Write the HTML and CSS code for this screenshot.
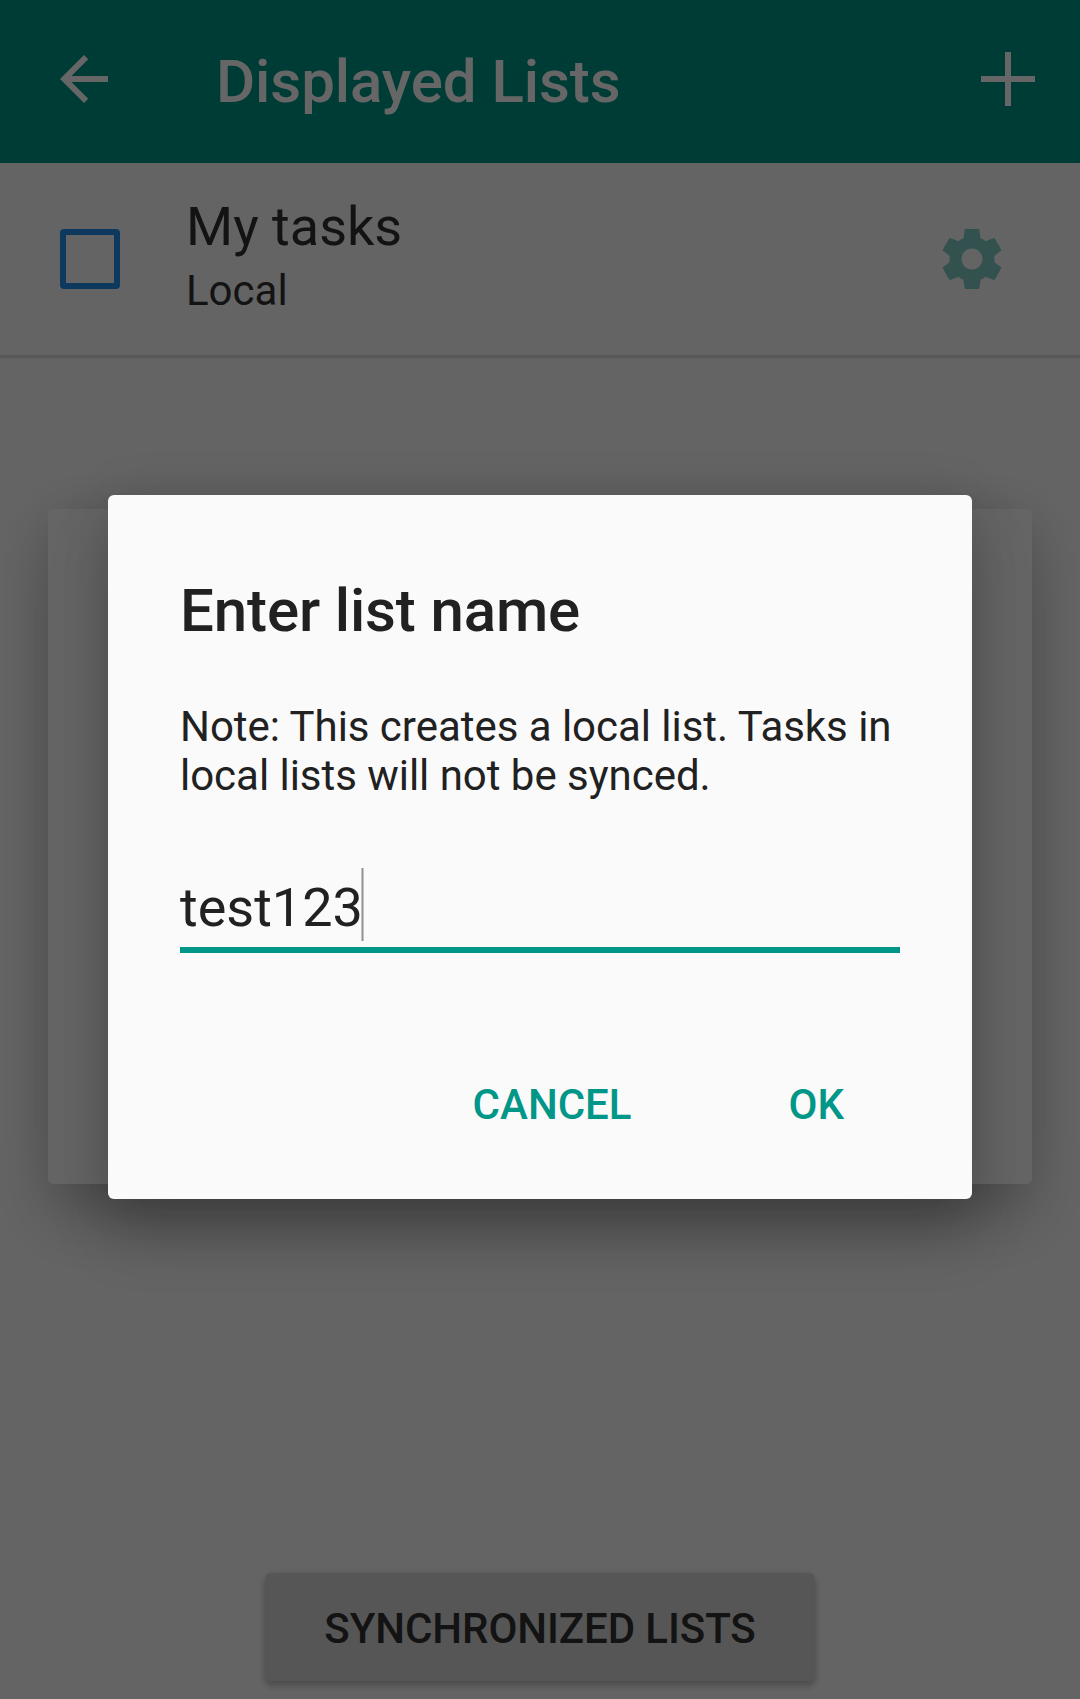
FILE: index.html
```html
<!DOCTYPE html>
<html lang="en">
<head>
<meta charset="utf-8">
<title>Displayed Lists</title>
<link rel="stylesheet" href="styles.css">
</head>
<body>
<div class="screen">
  <header class="toolbar">
    <svg class="icon back" viewBox="0 0 24 24"><path d="M20 11H7.83l5.59-5.59L12 4l-8 8 8 8 1.41-1.41L7.83 13H20v-2z"/></svg>
    <h1 class="toolbar-title">Displayed Lists</h1>
    <svg class="add" viewBox="0 0 54 54"><path d="M24 0h6v24h24v6H30v24h-6V30H0v-6h24z"/></svg>
  </header>
  <div class="list-row">
    <span class="checkbox"></span>
    <div class="list-text">
      <div class="list-name">My tasks</div>
      <div class="list-account">Local</div>
    </div>
    <svg class="icon gear" viewBox="0 0 24 24"><path d="M19.43 12.98c.04-.32.07-.64.07-.98s-.03-.66-.07-.98l2.11-1.65c.19-.15.24-.42.12-.64l-2-3.46c-.12-.22-.39-.3-.61-.22l-2.49 1c-.52-.4-1.08-.73-1.69-.98l-.38-2.65C14.46 2.18 14.25 2 14 2h-4c-.25 0-.46.18-.49.42l-.38 2.65c-.61.25-1.17.59-1.69.98l-2.49-1c-.23-.09-.49 0-.61.22l-2 3.46c-.13.22-.07.49.12.64l2.11 1.65c-.04.32-.07.65-.07.98s.03.66.07.98l-2.11 1.65c-.19.15-.24.42-.12.64l2 3.46c.12.22.39.3.61.22l2.49-1c.52.4 1.08.73 1.69.98l.38 2.65c.03.24.24.42.49.42h4c.25 0 .46-.18.49-.42l.38-2.65c.61-.25 1.17-.59 1.69-.98l2.49 1c.23.09.49 0 .61-.22l2-3.46c.12-.22.07-.49-.12-.64l-2.11-1.65zM12 15.5c-1.93 0-3.5-1.57-3.5-3.5s1.57-3.5 3.5-3.5 3.5 1.57 3.5 3.5-1.57 3.5-3.5 3.5z"/></svg>
  </div>
  <div class="panel"></div>
  <button class="sync">SYNCHRONIZED LISTS</button>
</div>
<div class="scrim">
  <div class="dialog">
    <h2 class="dialog-title">Enter list name</h2>
    <p class="note">Note: This creates a local list. Tasks in local lists will not be synced.</p>
    <div class="field">test123<span class="caret"></span></div>
    <div class="actions"><span>CANCEL</span><span>OK</span></div>
  </div>
</div>
</body>
</html>
```

FILE: styles.css
```css
* { box-sizing: border-box; }
body {
  margin: 0;
  font-family: Roboto, sans-serif;
  color: #212121;
}
h1, h2, p { margin: 0; font-weight: 500; }
.screen {
  height: 1699px;
  background: #fafafa;
  display: flex;
  flex-direction: column;
  overflow: hidden;
}
.toolbar {
  height: 163px;
  flex: none;
  background: #009688;
  color: #fff;
  display: flex;
  align-items: center;
  padding: 0 45px 0 48px;
}
.icon { width: 72px; height: 72px; flex: none; display: block; }
.back { fill: #fff; margin-bottom: 5px; }
.toolbar-title {
  font-size: 60px;
  line-height: 70px;
  letter-spacing: -0.07px;
  margin-left: 96px;
  flex: 1;
}
.add { width: 54px; height: 54px; fill: #fff; margin-bottom: 5px; }
.list-row {
  height: 195px;
  flex: none;
  border-bottom: 3px solid #dcdcdc;
  padding: 32px 72px 0 60px;
  display: flex;
  align-items: flex-start;
  color: #303030;
}
.checkbox {
  width: 60px;
  height: 60px;
  margin-top: 34px;
  border: 6px solid #2190ee;
  border-radius: 4px;
}
.list-text { flex: 1; margin-left: 66px; }
.list-name { font-size: 54px; line-height: 63px; }
.list-account { font-size: 42px; line-height: 49px; margin-top: 8px; }
.gear { fill: #80cbc4; margin-top: 28px; }
.panel {
  flex: none;
  height: 675px;
  margin: 151px 48px 0;
  border-radius: 6px;
  background: #fcfcfc;
  box-shadow: 0 36px 60px rgba(0,0,0,.19), 0 0 50px rgba(0,0,0,.1);
}
.sync {
  flex: none;
  align-self: center;
  width: 550px;
  height: 108px;
  margin-top: 389px;
  padding: 3px 0 0;
  border: 0;
  border-radius: 6px;
  background: #d6d7d7;
  color: #303030;
  font: 500 42px/49px Roboto, sans-serif;
  letter-spacing: -0.08px;
  box-shadow: 0 6px 6px rgba(0,0,0,.17), 0 1px 6px rgba(0,0,0,.13);
}
.scrim {
  position: absolute;
  inset: 0;
  height: 1699px;
  overflow: hidden;
  background: rgba(0,0,0,.6);
  padding: 495px 108px 0;
}
.dialog {
  height: 704px;
  padding: 81px 72px 0;
  border-radius: 6px;
  background: #fafafa;
  box-shadow: 0 36px 60px rgba(0,0,0,.2), 0 0 50px rgba(0,0,0,.1);
}
.dialog-title { font-size: 60px; line-height: 70px; letter-spacing: -0.13px; }
.note {
  margin-top: 56px;
  font-size: 42px;
  font-weight: 400;
  line-height: 49px;
  letter-spacing: -0.03px;
}
.field {
  margin-top: 76px;
  height: 77px;
  border-bottom: 6px solid #009688;
  font-size: 54px;
  line-height: 63px;
  display: flex;
}
.caret {
  width: 3px;
  height: 73px;
  margin: -8px 0 0 -2px;
  background: #929292;
  border: solid #c4c4c4;
  border-width: 0 1px;
}
.actions {
  margin-top: 127px;
  padding-right: 56px;
  display: flex;
  justify-content: flex-end;
  gap: 157px;
  color: #009688;
  font-size: 42px;
  font-weight: 500;
  line-height: 49px;
}
```
